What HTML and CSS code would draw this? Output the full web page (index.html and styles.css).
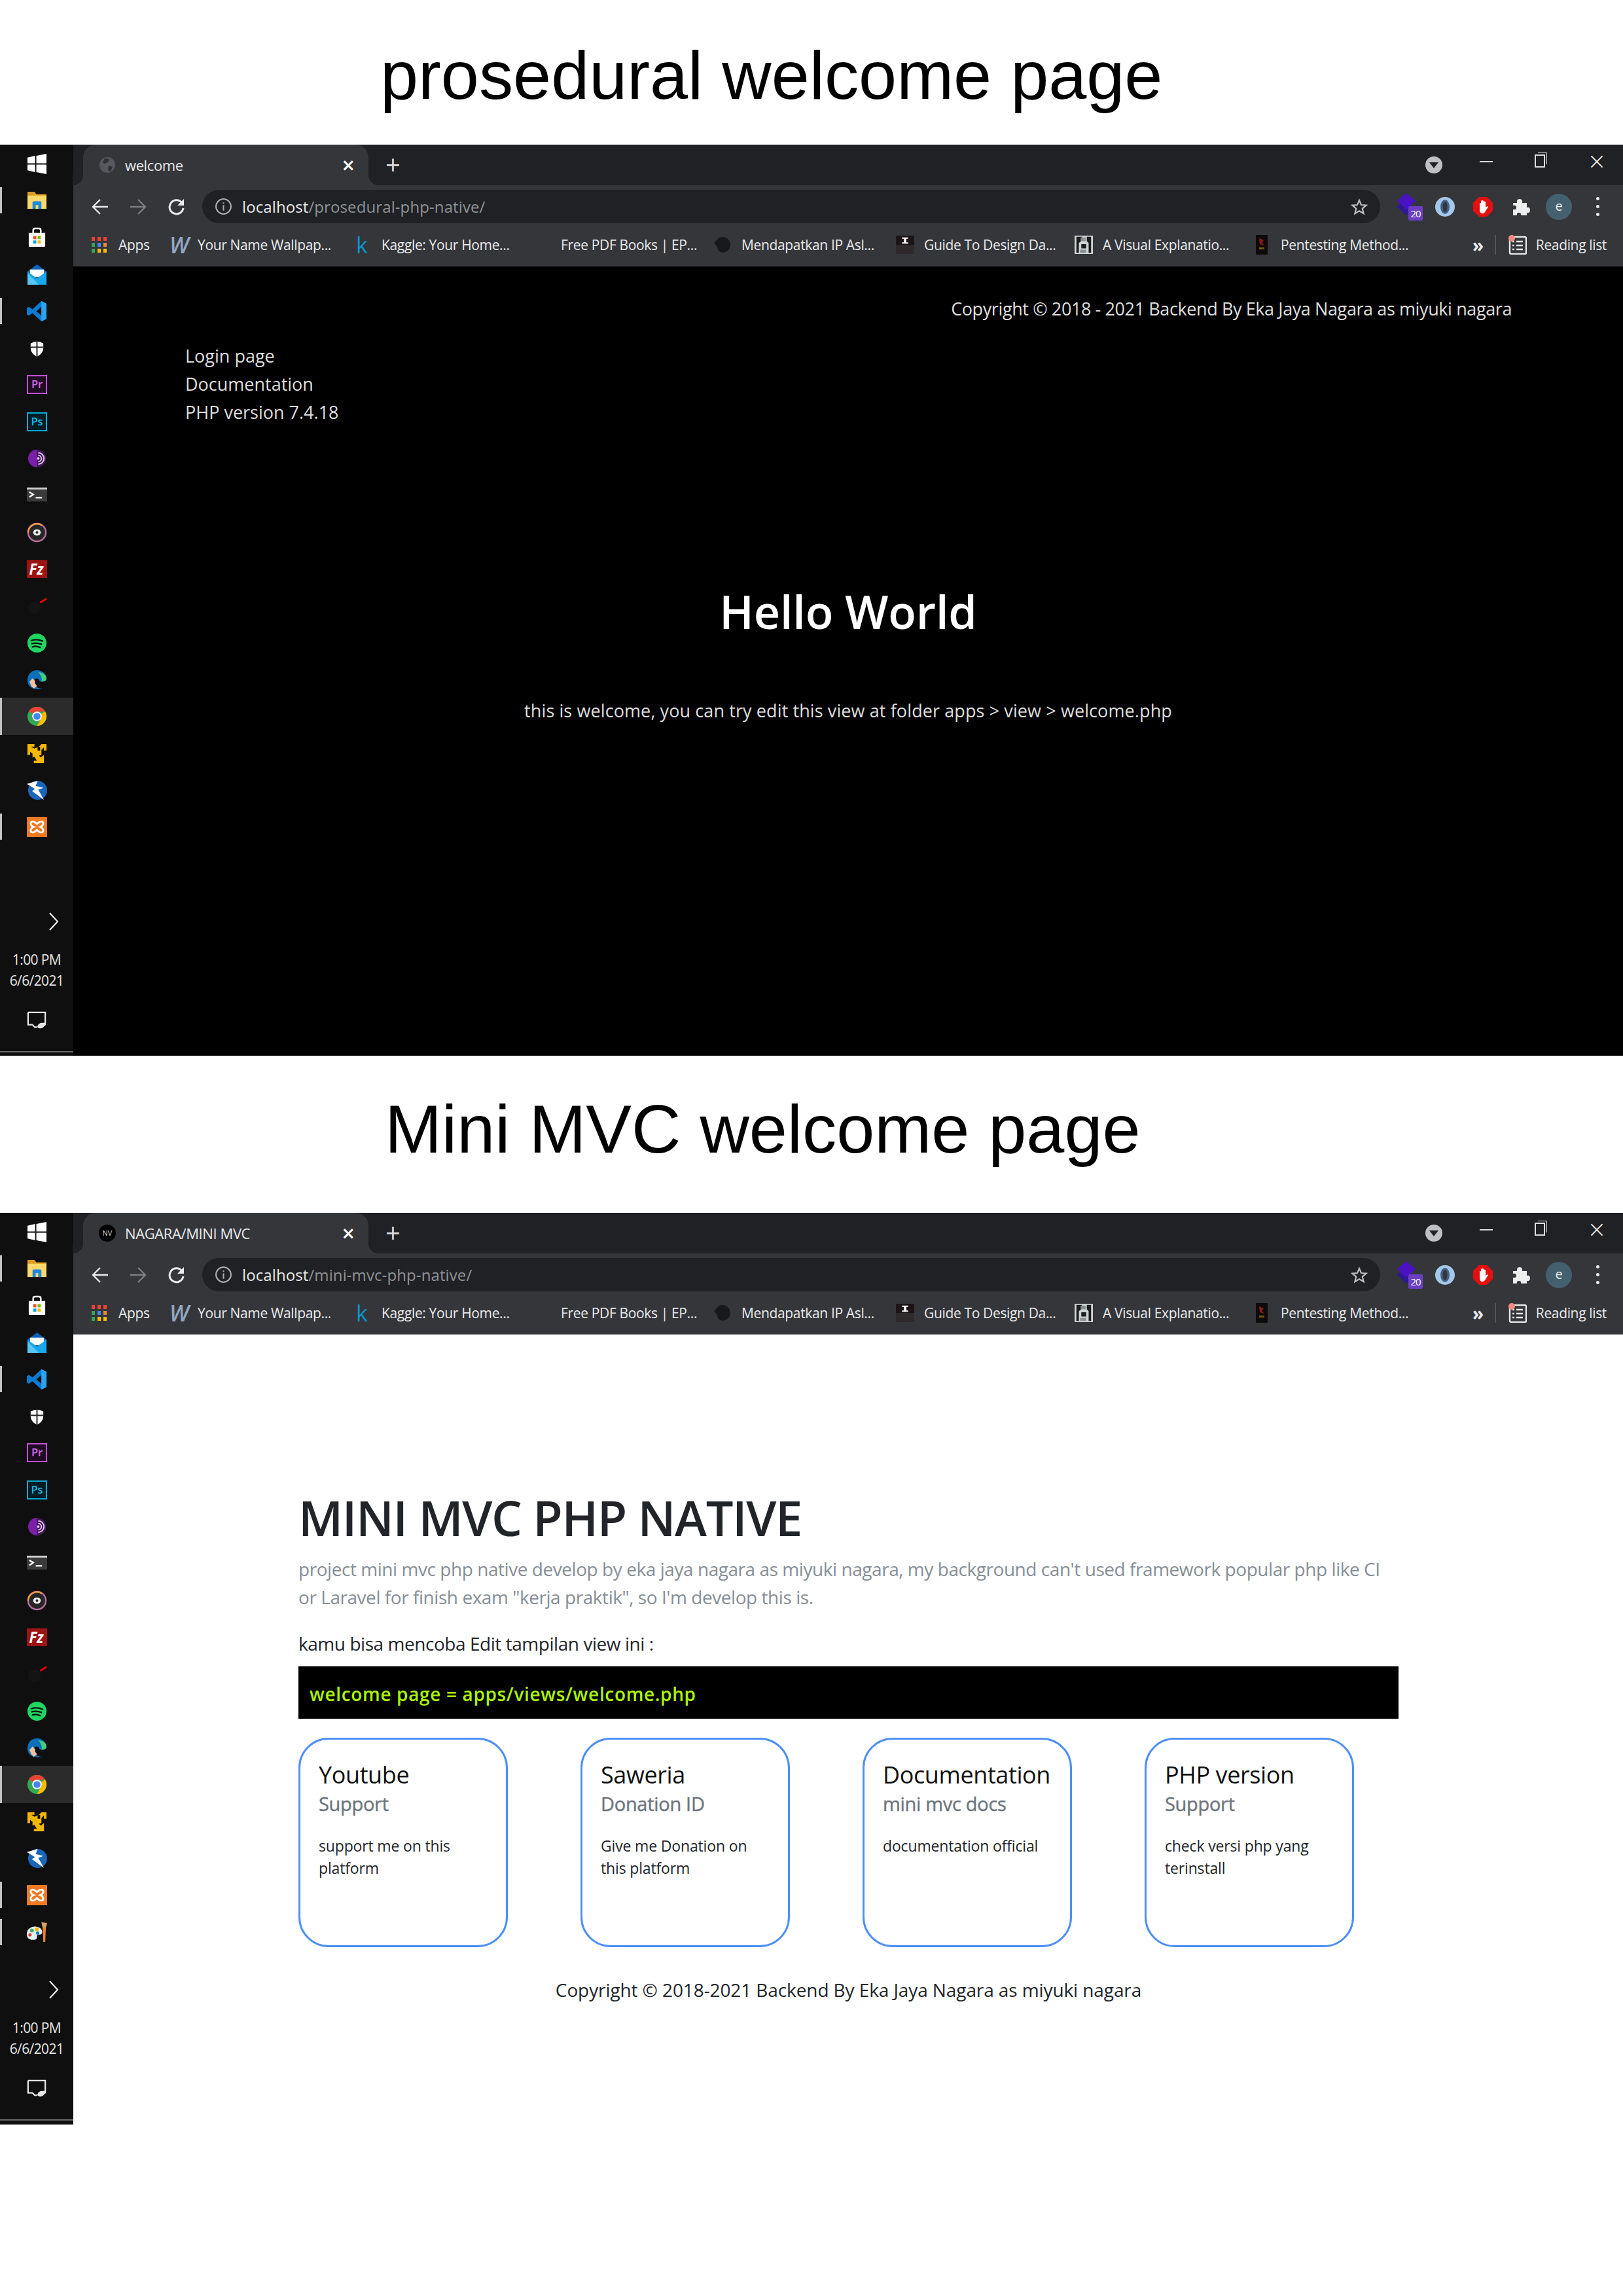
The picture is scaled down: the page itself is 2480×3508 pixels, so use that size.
FILE: index.html
```html
<!DOCTYPE html>
<html lang="en">
<head>
<meta charset="utf-8">
<title>welcome pages</title>
<link rel="stylesheet" href="styles.css">
</head>
<body>
<svg class="defs" aria-hidden="true">
  <symbol id="i-win" viewBox="0 0 32 32"><path fill="#fff" d="M1 6l12-3v12H1zM15 3l16-3v15H15zM1 17h12v12L1 26zM15 17h16v15l-16-3z"/></symbol>
  <symbol id="i-folder" viewBox="0 0 32 32"><path fill="#dc9c22" d="M1 2h11l3 4h16v6H1z"/><path fill="#fbd96b" d="M1 8h30v21H1z"/><path fill="#1c8ae0" d="M9 29V19q0-2 2-2h10q2 0 2 2v10h-5v-6h-4v6z"/></symbol>
  <symbol id="i-store" viewBox="0 0 32 32"><path fill="none" stroke="#fff" stroke-width="2.5" d="M10 10V5q0-3 3-3h6q3 0 3 3v5"/><path fill="#fff" d="M3 9h26v21q0 1-1 1H4q-1 0-1-1z"/><path fill="#f25022" d="M10 14h5v5h-5z"/><path fill="#7fba00" d="M17 14h5v5h-5z"/><path fill="#00a4ef" d="M10 21h5v5h-5z"/><path fill="#ffb900" d="M17 21h5v5h-5z"/></symbol>
  <symbol id="i-mail" viewBox="0 0 32 32"><path fill="#0a63b8" d="M1 11L16 0l15 11v4H1z"/><path fill="#fff" d="M5 8h22v12H5z"/><path fill="#1aa7ec" d="M1 11l15 11 15-11v21H1z"/><path fill="#56c6f5" d="M1 32V14l18 18z"/></symbol>
  <symbol id="i-code" viewBox="0 0 32 32"><path fill="#0b7ad1" d="M23 0l8 4v24l-8 4-14-13-6 4-3-2V11l3-2 6 4zm0 9l-8 7 8 7z"/><path fill="#2aa3ef" d="M23 0l8 4v24l-8 4z"/></symbol>
  <symbol id="i-shield" viewBox="0 0 32 32"><path fill="#fff" d="M6 9q10-6 20 0v7q0 9-10 14Q6 25 6 16z"/><path stroke="#222" stroke-width="2" d="M16 4v26M5 15h22"/></symbol>
  <symbol id="i-pr" viewBox="0 0 32 32"><rect x="1" y="2" width="30" height="28" fill="#1f0a24" stroke="#c453d8" stroke-width="2"/><text x="16" y="22" text-anchor="middle" class="ico-text" fill="#d26be6" font-size="17">Pr</text></symbol>
  <symbol id="i-ps" viewBox="0 0 32 32"><rect x="1" y="2" width="30" height="28" fill="#001d26" stroke="#00b4e0" stroke-width="2"/><text x="16" y="22" text-anchor="middle" class="ico-text" fill="#12bce6" font-size="17">Ps</text></symbol>
  <symbol id="i-tor" viewBox="0 0 32 32"><circle cx="16" cy="16" r="14" fill="#7c1fa8"/><path fill="#3d1a50" d="M16 2a14 14 0 010 28z"/><path fill="none" stroke="#e8c6f2" stroke-width="2" d="M18 7a9 9 0 010 18M18 11a5 5 0 010 10"/><circle cx="18" cy="16" r="2" fill="#e8c6f2"/></symbol>
  <symbol id="i-term" viewBox="0 0 32 32"><rect y="4" width="32" height="22" fill="#3a3a3a"/><rect y="4" width="32" height="3" fill="#ccc"/><path fill="none" stroke="#fff" stroke-width="2.5" d="M4 11l6 4-6 4M14 20h10"/></symbol>
  <symbol id="i-disc" viewBox="0 0 32 32"><circle cx="16" cy="16" r="14" fill="#262626" stroke="#b76fa0" stroke-width="2.5"/><path fill="none" stroke="#ef9a4a" stroke-width="2.5" d="M2 16A14 14 0 0124 5"/><ellipse cx="16" cy="16" rx="6" ry="5" fill="#eee"/><circle cx="16" cy="16" r="2" fill="#222"/></symbol>
  <symbol id="i-fz" viewBox="0 0 32 32"><rect y="2" width="32" height="28" fill="#9d1313"/><text x="15" y="25" text-anchor="middle" class="ico-text ico-bi" fill="#fff" font-size="23">Fz</text></symbol>
  <symbol id="i-tick" viewBox="0 0 32 32"><circle cx="12" cy="19" r="10" fill="#141414"/><path stroke="#e00" stroke-width="3" d="M21 11l10-6"/></symbol>
  <symbol id="i-spot" viewBox="0 0 32 32"><circle cx="16" cy="16" r="15" fill="#1ed760"/><path fill="none" stroke="#111" stroke-width="2.400" stroke-linecap="round" d="M7 12q9-3 18 1M8 17q8-2 15 1M9 22q6-2 12 1"/></symbol>
  <symbol id="i-edge" viewBox="0 0 32 32"><path fill="#0c6fb8" d="M1 17C1 7 8 1 16 1c8 0 15 6 15 13 0 4-4 5-8 5-5 0-2-4-7-5-6 0-6 8-1 13 2 2 6 3 10 3-3 1-5 1-8 1C7 31 1 25 1 17z"/><path fill="#3fd07a" d="M18 4c6 0 13 4 13 10 0 4-4 5-8 5 2-5-1-11-5-15z"/><path fill="#f0c3a0" d="M4 19l5-5 4 4v4l3 4-5 4-4-4z"/></symbol>
  <symbol id="i-chrome" viewBox="0 0 32 32"><circle cx="16" cy="16" r="15" fill="#34a853"/><path fill="#ea4335" d="M16 1a15 15 0 0113 7.500H16a7.500 7.500 0 00-6.500 3.700L3 8a15 15 0 0113-7z"/><path fill="#fbbc05" d="M29 8.500a15 15 0 01-13 22.500l6.500-11.300A7.500 7.500 0 0023 16a7.500 7.500 0 00-1-3.700z"/><circle cx="16" cy="16" r="7.500" fill="#fff"/><circle cx="16" cy="16" r="5.500" fill="#4285f4"/></symbol>
  <symbol id="i-yellow" viewBox="0 0 32 32"><path fill="#f5b800" d="M1 2h11v4H7l5 3 5-2v5h4V6l-3 1 5-5h8v10h-4V7l-4 4v8l-4 1 3 3 5-4v13H11v-4h5l-4-6-3 1v-6l-4-3v5H1z"/></symbol>
  <symbol id="i-bolt" viewBox="0 0 32 32"><circle cx="17" cy="16" r="15" fill="#1a66b8"/><path fill="#fff" d="M0 6l17-5-3 8 12 3-8 3 9 16L8 17l5-3z"/></symbol>
  <symbol id="i-xampp" viewBox="0 0 32 32"><rect width="32" height="32" rx="1" fill="#ee7a24"/><path fill="none" stroke="#fff" stroke-width="3" d="M12 8q-5-2-6 2 0 4 5 6-5 2-5 6 1 4 6 2l4-3 4 3q5 2 6-2 0-4-5-6 5-2 5-6-1-4-6-2l-4 3z"/></symbol>
  <symbol id="i-paint" viewBox="0 0 32 32"><path fill="#e2f2fa" d="M0 20C0 11 8 7 15 8c7 1 10 5 9 10-1 3-5 2-7 3-2 2 0 6-3 7C6 30 0 27 0 20z"/><circle cx="8" cy="14" r="3" fill="#3bb54a"/><circle cx="16" cy="12" r="3" fill="#f5b800"/><circle cx="5" cy="21" r="2.600" fill="#e8392c"/><circle cx="17" cy="18" r="2.600" fill="#1c6fc4"/><path fill="#f0861e" d="M25 10h5l-1 22h-3z"/><path fill="#d9a066" d="M23 1l9 1-2 8h-5z"/></symbol>

  <symbol id="i-chev" viewBox="0 0 16 28"><path fill="none" stroke="#eee" stroke-width="2.200" d="M2 1l12 13L2 27"/></symbol>
  <symbol id="i-back" viewBox="0 0 26 26"><path fill="none" stroke="currentColor" stroke-width="2.400" d="M25 13H3M13 2L2 13l11 11"/></symbol>
  <symbol id="i-fwd" viewBox="0 0 26 26"><path fill="none" stroke="currentColor" stroke-width="2.400" d="M1 13h22M13 2l11 11-11 11"/></symbol>
  <symbol id="i-reload" viewBox="0 0 26 26"><path fill="none" stroke="currentColor" stroke-width="3" d="M22 7a10.500 10.500 0 10 2 8"/><path fill="currentColor" d="M25 1v10H15z"/></symbol>
  <symbol id="i-info" viewBox="0 0 26 26"><circle cx="13" cy="13" r="11" fill="none" stroke="currentColor" stroke-width="2"/><path fill="currentColor" d="M12 11h2v8h-2zM12 7h2v2h-2z"/></symbol>
  <symbol id="i-star" viewBox="0 0 26 26"><path fill="none" stroke="currentColor" stroke-width="2.200" d="M13 3l3 7 7.500.700-5.700 5 1.800 7.500L13 19.300 6.400 23.200 8.200 15.700 2.500 10.700 10 10z"/></symbol>
  <symbol id="i-globe" viewBox="0 0 26 26"><circle cx="13" cy="13" r="12" fill="#55585e"/><path fill="#2f3135" d="M9 3l7 1-2 5-5 2-3-2zM15 14l6 2-3 7-4-2z"/></symbol>
  <symbol id="i-apps" viewBox="0 0 24 26"><path fill="#ea4335" d="M0 1h5v6H0zM9 1h5v6H9zM18 1h5v6h-5z"/><path fill="#34a853" d="M0 10h5v6H0z"/><path fill="#4285f4" d="M9 10h5v6H9z"/><path fill="#ea8a35" d="M18 10h5v6h-5z"/><path fill="#34a853" d="M0 19h5v6H0z"/><path fill="#fbbc05" d="M9 19h5v6H9zM18 19h5v6h-5z"/></symbol>
  <symbol id="i-ghost" viewBox="0 0 28 28"><path fill="#17181a" d="M1 11L9 3q5-2 10 0 7 4 7 11t-7 11q-6 2-10-1-3-3-3-7z"/></symbol>
  <symbol id="i-24" viewBox="0 0 30 30"><rect width="30" height="15" fill="#1c1416"/><rect y="15" width="30" height="15" fill="#2e2a2c"/><path fill="#fff" d="M10 3h10v2h-3v6h3v2H10v-2h3V5h-3z"/></symbol>
  <symbol id="i-pic" viewBox="0 0 30 30"><rect width="30" height="30" fill="#cfd4d4"/><path fill="#1c1c1c" d="M3 2h9v6l-5 4v16H3zM27 2h-7v7l3 3v16h4zM11 14h8v7h-8z"/><path fill="#8a9090" d="M10 3h8v6h-8zM9 23h10v5H9z"/></symbol>
  <symbol id="i-book" viewBox="0 0 18 30"><rect width="18" height="30" rx="1" fill="#0e0a0a"/><path fill="#8e1c16" d="M5 5l7 3-3 4 4 4-7-2z"/><path fill="#6b5a10" d="M5 19h8v3H5z"/></symbol>
  <symbol id="i-stack" viewBox="0 0 40 42"><path fill="#2e1a8c" d="M0 20L14 34l14-10L14 12z"/><path fill="#4a12c4" d="M1 12L15 0l14 12-14 13z"/><rect x="18" y="20" width="22" height="22" rx="2" fill="#6a3fc4"/></symbol>
  <symbol id="i-ring" viewBox="0 0 30 30"><ellipse cx="15" cy="15" rx="15" ry="15" fill="#a4c8ea"/><ellipse cx="15" cy="15" rx="7" ry="11" fill="#44628a"/><ellipse cx="15" cy="15" rx="3.500" ry="8" fill="#35363a"/></symbol>
  <symbol id="i-stop" viewBox="0 0 30 30"><path fill="#e60f0f" d="M9 0h12l9 9v12l-9 9H9l-9-9V9z"/><path fill="#fff" d="M10 9q2-1 2 2V6q2-2 4 0v1q3-1 3 1v8q3-3 4-1l-5 8q-2 3-5 2-3-1-3-5z"/></symbol>
  <symbol id="i-puzzle" viewBox="0 0 28 28"><path fill="#eee" d="M2 8h6q-1-6 4-6t4 6h7v7q5-1 5 4t-5 4v4H14q1-4-3-4t-3 4H2v-9q5 1 5-3T2 12z"/></symbol>
  <symbol id="i-reading" viewBox="0 0 28 30"><rect x="2" y="3" width="25" height="26" rx="2" fill="none" stroke="#e8e8e8" stroke-width="2.400"/><path stroke="#e8e8e8" stroke-width="2.400" d="M6 10h3M12 10h10M6 16h3M12 16h10M6 22h3M12 22h10"/><circle cx="5" cy="5" r="5" fill="#f28b82"/></symbol>
  <symbol id="i-note" viewBox="0 0 32 32"><path fill="none" stroke="#e6e6e6" stroke-width="2.400" d="M2 3h28v18q0 3-3 3h-1M17 27l-4 0-4-4H2V3"/><path fill="#e6e6e6" d="M17 26q2-6 8-6 5 0 5 0-1 8-7 9-5 0-6-3z"/></symbol>
</svg>

<main class="page">
  <header class="caption caption-first"><h2 class="caption-text">prosedural welcome page</h2></header>

  <section class="window window-dark">
    <aside class="taskbar">
      <div class="slots">
        <div class="slot"><svg class="ti"><use href="#i-win"/></svg></div>
        <div class="slot on"><svg class="ti"><use href="#i-folder"/></svg></div>
        <div class="slot"><svg class="ti"><use href="#i-store"/></svg></div>
        <div class="slot"><svg class="ti"><use href="#i-mail"/></svg></div>
        <div class="slot on"><svg class="ti"><use href="#i-code"/></svg></div>
        <div class="slot"><svg class="ti"><use href="#i-shield"/></svg></div>
        <div class="slot"><svg class="ti"><use href="#i-pr"/></svg></div>
        <div class="slot"><svg class="ti"><use href="#i-ps"/></svg></div>
        <div class="slot"><svg class="ti"><use href="#i-tor"/></svg></div>
        <div class="slot"><svg class="ti"><use href="#i-term"/></svg></div>
        <div class="slot"><svg class="ti"><use href="#i-disc"/></svg></div>
        <div class="slot"><svg class="ti"><use href="#i-fz"/></svg></div>
        <div class="slot"><svg class="ti"><use href="#i-tick"/></svg></div>
        <div class="slot"><svg class="ti"><use href="#i-spot"/></svg></div>
        <div class="slot"><svg class="ti"><use href="#i-edge"/></svg></div>
        <div class="slot current"><svg class="ti"><use href="#i-chrome"/></svg></div>
        <div class="slot"><svg class="ti"><use href="#i-yellow"/></svg></div>
        <div class="slot"><svg class="ti"><use href="#i-bolt"/></svg></div>
        <div class="slot on"><svg class="ti"><use href="#i-xampp"/></svg></div>
      </div>
      <div class="tray">
        <svg class="tray-chevron"><use href="#i-chev"/></svg>
        <div class="clock"><span>1:00 PM</span><span>6/6/2021</span></div>
        <svg class="tray-note"><use href="#i-note"/></svg>
        <div class="tray-line"></div>
      </div>
    </aside>
    <div class="browser">
      <div class="tabstrip">
        <div class="tab">
          <svg class="favicon"><use href="#i-globe"/></svg>
          <span class="tab-title">welcome</span>
          <span class="tab-close">×</span>
        </div>
        <span class="tab-new">+</span>
        <span class="tab-search"><span class="tab-search-tri"></span></span>
        <span class="win-min"></span>
        <span class="win-restore"></span>
        <span class="win-close">×</span>
      </div>
      <div class="toolbar">
        <svg class="nav nav-on"><use href="#i-back"/></svg>
        <svg class="nav nav-off"><use href="#i-fwd"/></svg>
        <svg class="nav nav-on"><use href="#i-reload"/></svg>
        <div class="omnibox">
          <svg class="omni-info"><use href="#i-info"/></svg>
          <span class="url"><span class="url-host">localhost</span>/prosedural-php-native/</span>
          <svg class="omni-star"><use href="#i-star"/></svg>
        </div>
        <div class="exts">
          <span class="ext-stack"><svg class="ext-stack-ico"><use href="#i-stack"/></svg><span class="ext-count">20</span></span>
          <svg class="ext-ring"><use href="#i-ring"/></svg>
          <svg class="ext-stop"><use href="#i-stop"/></svg>
          <svg class="ext-puzzle"><use href="#i-puzzle"/></svg>
          <span class="avatar">e</span>
          <span class="dots"><i></i><i></i><i></i></span>
        </div>
      </div>
      <div class="bookmarks">
        <div class="bm"><svg class="bm-apps"><use href="#i-apps"/></svg>Apps</div>
        <div class="bm"><span class="bm-w">W</span>Your Name Wallpap...</div>
        <div class="bm"><span class="bm-k">k</span>Kaggle: Your Home...</div>
        <div class="bm"><span class="bm-blank"></span>Free PDF Books | EP...</div>
        <div class="bm"><svg class="bm-ico"><use href="#i-ghost"/></svg>Mendapatkan IP Asl...</div>
        <div class="bm"><svg class="bm-ico"><use href="#i-24"/></svg>Guide To Design Da...</div>
        <div class="bm"><svg class="bm-ico"><use href="#i-pic"/></svg>A Visual Explanatio...</div>
        <div class="bm"><svg class="bm-book"><use href="#i-book"/></svg>Pentesting Method...</div>
        <div class="bm-end"><span class="bm-more">»</span><span class="bm-sep"></span><svg class="bm-reading"><use href="#i-reading"/></svg>Reading list</div>
      </div>
      <div class="dark-page">
        <p class="dark-copy">Copyright © 2018 - 2021 Backend By Eka Jaya Nagara as miyuki nagara</p>
        <ul class="dark-nav">
          <li>Login page</li>
          <li>Documentation</li>
          <li>PHP version 7.4.18</li>
        </ul>
        <h1 class="dark-title">Hello World</h1>
        <p class="dark-text">this is welcome, you can try edit this view at folder apps &gt; view &gt; welcome.php</p>
      </div>
    </div>
  </section>

  <header class="caption caption-second"><h2 class="caption-text caption-text-b">Mini MVC welcome page</h2></header>

  <section class="window window-light">
    <aside class="taskbar">
      <div class="slots">
        <div class="slot"><svg class="ti"><use href="#i-win"/></svg></div>
        <div class="slot on"><svg class="ti"><use href="#i-folder"/></svg></div>
        <div class="slot"><svg class="ti"><use href="#i-store"/></svg></div>
        <div class="slot"><svg class="ti"><use href="#i-mail"/></svg></div>
        <div class="slot on"><svg class="ti"><use href="#i-code"/></svg></div>
        <div class="slot"><svg class="ti"><use href="#i-shield"/></svg></div>
        <div class="slot"><svg class="ti"><use href="#i-pr"/></svg></div>
        <div class="slot"><svg class="ti"><use href="#i-ps"/></svg></div>
        <div class="slot"><svg class="ti"><use href="#i-tor"/></svg></div>
        <div class="slot"><svg class="ti"><use href="#i-term"/></svg></div>
        <div class="slot"><svg class="ti"><use href="#i-disc"/></svg></div>
        <div class="slot"><svg class="ti"><use href="#i-fz"/></svg></div>
        <div class="slot"><svg class="ti"><use href="#i-tick"/></svg></div>
        <div class="slot"><svg class="ti"><use href="#i-spot"/></svg></div>
        <div class="slot"><svg class="ti"><use href="#i-edge"/></svg></div>
        <div class="slot current"><svg class="ti"><use href="#i-chrome"/></svg></div>
        <div class="slot"><svg class="ti"><use href="#i-yellow"/></svg></div>
        <div class="slot"><svg class="ti"><use href="#i-bolt"/></svg></div>
        <div class="slot on"><svg class="ti"><use href="#i-xampp"/></svg></div>
        <div class="slot on"><svg class="ti"><use href="#i-paint"/></svg></div>
      </div>
      <div class="tray">
        <svg class="tray-chevron"><use href="#i-chev"/></svg>
        <div class="clock"><span>1:00 PM</span><span>6/6/2021</span></div>
        <svg class="tray-note"><use href="#i-note"/></svg>
        <div class="tray-line"></div>
      </div>
    </aside>
    <div class="browser">
      <div class="tabstrip">
        <div class="tab">
          <span class="favicon favicon-nv">NV</span>
          <span class="tab-title">NAGARA/MINI MVC</span>
          <span class="tab-close">×</span>
        </div>
        <span class="tab-new">+</span>
        <span class="tab-search"><span class="tab-search-tri"></span></span>
        <span class="win-min"></span>
        <span class="win-restore"></span>
        <span class="win-close">×</span>
      </div>
      <div class="toolbar">
        <svg class="nav nav-on"><use href="#i-back"/></svg>
        <svg class="nav nav-off"><use href="#i-fwd"/></svg>
        <svg class="nav nav-on"><use href="#i-reload"/></svg>
        <div class="omnibox">
          <svg class="omni-info"><use href="#i-info"/></svg>
          <span class="url"><span class="url-host">localhost</span>/mini-mvc-php-native/</span>
          <svg class="omni-star"><use href="#i-star"/></svg>
        </div>
        <div class="exts">
          <span class="ext-stack"><svg class="ext-stack-ico"><use href="#i-stack"/></svg><span class="ext-count">20</span></span>
          <svg class="ext-ring"><use href="#i-ring"/></svg>
          <svg class="ext-stop"><use href="#i-stop"/></svg>
          <svg class="ext-puzzle"><use href="#i-puzzle"/></svg>
          <span class="avatar">e</span>
          <span class="dots"><i></i><i></i><i></i></span>
        </div>
      </div>
      <div class="bookmarks">
        <div class="bm"><svg class="bm-apps"><use href="#i-apps"/></svg>Apps</div>
        <div class="bm"><span class="bm-w">W</span>Your Name Wallpap...</div>
        <div class="bm"><span class="bm-k">k</span>Kaggle: Your Home...</div>
        <div class="bm"><span class="bm-blank"></span>Free PDF Books | EP...</div>
        <div class="bm"><svg class="bm-ico"><use href="#i-ghost"/></svg>Mendapatkan IP Asl...</div>
        <div class="bm"><svg class="bm-ico"><use href="#i-24"/></svg>Guide To Design Da...</div>
        <div class="bm"><svg class="bm-ico"><use href="#i-pic"/></svg>A Visual Explanatio...</div>
        <div class="bm"><svg class="bm-book"><use href="#i-book"/></svg>Pentesting Method...</div>
        <div class="bm-end"><span class="bm-more">»</span><span class="bm-sep"></span><svg class="bm-reading"><use href="#i-reading"/></svg>Reading list</div>
      </div>
      <div class="light-page">
        <div class="container">
          <h1 class="jumbo-title">MINI MVC PHP NATIVE</h1>
          <p class="lead">project mini mvc php native develop by eka jaya nagara as miyuki nagara, my background can't used framework popular php like CI<br>or Laravel for finish exam "kerja praktik", so I'm develop this is.</p>
          <p class="hint">kamu bisa mencoba Edit tampilan view ini :</p>
          <pre class="code-bar">welcome page = apps/views/welcome.php</pre>
          <div class="cards">
            <article class="card">
              <h3 class="card-title">Youtube</h3>
              <h4 class="card-sub">Support</h4>
              <p class="card-text">support me on this platform</p>
            </article>
            <article class="card">
              <h3 class="card-title">Saweria</h3>
              <h4 class="card-sub">Donation ID</h4>
              <p class="card-text">Give me Donation on this platform</p>
            </article>
            <article class="card">
              <h3 class="card-title">Documentation</h3>
              <h4 class="card-sub">mini mvc docs</h4>
              <p class="card-text">documentation official</p>
            </article>
            <article class="card">
              <h3 class="card-title">PHP version</h3>
              <h4 class="card-sub">Support</h4>
              <p class="card-text">check versi php yang terinstall</p>
            </article>
          </div>
          <p class="light-copy">Copyright © 2018-2021 Backend By Eka Jaya Nagara as miyuki nagara</p>
        </div>
      </div>
    </div>
  </section>
</main>
</body>
</html>
```
FILE: styles.css
```css
* { box-sizing: border-box; }
html, body { margin: 0; padding: 0; background: #fff; }
body { width: 2480px; height: 3508px; overflow: hidden; font-family: "Open Sans", "Noto Sans", sans-serif; }
h1, h2, h3, h4, p, ul, pre { margin: 0; padding: 0; }
ul { list-style: none; }
.defs { display: none; }
.ico-text { font-family: "Open Sans", sans-serif; font-weight: 600; }
.ico-bi { font-style: italic; font-weight: 700; }

.page { display: flex; flex-direction: column; }
.caption { display: flex; align-items: center; background: #fff; }
.caption-first { height: 221px; padding: 8px 0 0 581px; }
.caption-second { height: 240px; padding: 0 0 16px 588px; }
.caption-text { font-family: "Liberation Sans", Arial, sans-serif; font-weight: 400; font-size: 104.4px; line-height: 120px; color: #000; }

.window { display: flex; width: 2480px; align-items: flex-start; }
.window-dark { height: 1392px; background: #000; }
.window-light { height: 1655px; background: #fff; }

.taskbar { flex: 0 0 112px; width: 112px; height: 1393px; background: #0f0f0f; display: flex; flex-direction: column; }
.slots { display: grid; grid-auto-rows: 56.3px; padding-top: 1px; }
.slot { position: relative; display: flex; align-items: center; justify-content: center; }
.slot.on::before, .slot.current::before { content: ""; position: absolute; left: 0; top: 8px; width: 3px; height: 40px; background: #c4c4c4; }
.slot.current { background: #2b2b2b; }
.slot.current::before { top: 0; height: 100%; }
.ti { width: 31px; height: 31px; display: block; }

.tray { margin-top: auto; display: flex; flex-direction: column; align-items: center; color: #e4e4e4; }
.tray-chevron { align-self: flex-end; width: 16px; height: 28px; margin-right: 22px; }
.clock { margin-top: 28px; display: flex; flex-direction: column; align-items: center; font-size: 21px; line-height: 32px; letter-spacing: -0.6px; }
.tray-note { width: 32px; height: 30px; margin-top: 30px; }
.tray-line { width: 112px; height: 2px; margin-top: 32px; margin-bottom: 6px; background: #6a6a6a; }

.browser { flex: 1 1 0; min-width: 0; display: flex; flex-direction: column; }

.tabstrip { height: 62px; background: #202124; display: flex; align-items: center; padding-left: 15px; padding-right: 32px; color: #e8eaed; }
.tab { position: relative; align-self: stretch; width: 436px; background: #35363a; border-radius: 20px 20px 0 0; display: flex; align-items: center; padding: 0 21px 0 24px; }
.tab::before, .tab::after { content: ""; position: absolute; bottom: 0; width: 16px; height: 16px; }
.tab::before { left: -16px; background: radial-gradient(circle at 0 0, #202124 16px, #35363a 16.5px); }
.tab::after { right: -16px; background: radial-gradient(circle at 100% 0, #202124 16px, #35363a 16.5px); }
.favicon { width: 26px; height: 26px; flex: 0 0 26px; display: block; }
.favicon-nv { border-radius: 50%; background: #000; color: #ddd; font-size: 11px; line-height: 26px; text-align: center; }
.tab-title { margin-left: 14px; font-size: 22px; letter-spacing: -0.4px; color: #e8eaed; }
.tab-close { margin-left: auto; font-size: 34px; line-height: 30px; font-weight: 600; color: #fff; }
.tab-new { margin-left: 26px; font-size: 40px; line-height: 40px; color: #ddd; font-weight: 400; }
.tab-search { margin-left: auto; width: 26px; height: 26px; border-radius: 50%; background: #bdc1c6; display: flex; align-items: center; justify-content: center; }
.tab-search-tri { width: 0; height: 0; border-left: 7px solid transparent; border-right: 7px solid transparent; border-top: 9px solid #202124; }
.win-min { margin-left: 57px; width: 20px; height: 2px; margin-top: -10px; background: #ddd; }
.win-restore { margin-left: 64px; margin-top: -12px; width: 16px; height: 20px; border: 2px solid #ddd; box-shadow: 3px -3px 0 -1px #202124, 4px -4px 0 -1px #ddd; }
.win-close { margin-left: 67px; width: 20px; margin-top: -12px; font-size: 42px; line-height: 28px; font-weight: 300; color: #eee; text-align: center; }

.toolbar { height: 58px; padding: 7px 0 0 28px; background: #35363a; display: flex; align-items: center; }
.nav { width: 26px; height: 26px; flex: 0 0 26px; margin-right: 32px; }
.nav-on { color: #e8eaed; }
.nav-off { color: #7c7e82; }
.nav:nth-of-type(3) { margin-right: 27px; }
.omnibox { width: 1800px; height: 51px; border-radius: 26px; background: #202124; display: flex; align-items: center; padding: 0 19px; }
.omni-info { width: 27px; height: 27px; color: #aaadb1; }
.url { margin-left: 15px; font-size: 24px; letter-spacing: 0.1px; color: #8f9296; }
.url-host { color: #e8eaed; }
.omni-star { margin-left: auto; width: 26px; height: 26px; color: #bdbfc3; }
.exts { display: flex; align-items: center; margin-left: 25px; }
.ext-stack { position: relative; display: block; width: 40px; height: 42px; }
.ext-stack-ico { width: 40px; height: 42px; display: block; }
.ext-count { position: absolute; right: 0; bottom: 0; width: 22px; height: 22px; font-size: 15px; line-height: 22px; letter-spacing: -1px; text-align: center; color: #fff; }
.ext-ring { width: 30px; height: 30px; margin-left: 19px; }
.ext-stop { width: 30px; height: 30px; margin-left: 28px; }
.ext-puzzle { width: 28px; height: 28px; margin-left: 29px; }
.avatar { width: 40px; height: 40px; margin-left: 24px; border-radius: 50%; background: #44606e; color: #e8eaed; font-size: 20px; line-height: 38px; text-align: center; }
.dots { display: flex; flex-direction: column; gap: 7px; margin-left: 37px; }
.dots i { width: 5px; height: 5px; border-radius: 50%; background: #e8eaed; display: block; }

.bookmarks { height: 66px; background: #35363a; border-bottom: 1px solid #4a4b4f; display: grid; grid-template-columns: 119px 285px 276px 270px 279px 273px 277px 1fr auto; align-items: center; padding: 0 25px 0 28px; font-size: 21px; letter-spacing: -0.35px; color: #e8eaed; white-space: nowrap; }
.bm, .bm-end { display: flex; align-items: center; }
.bm-apps { width: 24px; height: 26px; margin-right: 17px; }
.bm-w { width: 28px; margin-right: 15px; font-size: 34px; line-height: 30px; font-style: italic; font-weight: 600; letter-spacing: -3px; color: #92a6c0; }
.bm-k { width: 18px; margin-right: 21px; font-size: 34px; line-height: 30px; color: #0c93c9; letter-spacing: 0; }
.bm-blank { width: 18px; height: 28px; margin-right: 19px; }
.bm-ico { width: 28px; height: 28px; margin-right: 15px; }
.bm-book { width: 18px; height: 30px; margin-right: 20px; }
.bm-more { font-size: 28px; line-height: 28px; font-weight: 700; }
.bm-sep { width: 1px; height: 30px; margin-left: 18px; background: #5f6368; }
.bm-reading { width: 28px; height: 30px; margin: 0 14px 0 19px; }

.dark-page { height: 985px; background: #000; color: #dedede; font-size: 27px; line-height: 43px; padding-top: 43px; }
.dark-copy { text-align: right; padding-right: 170px; letter-spacing: -0.4px; }
.dark-nav { margin-top: 29px; padding-left: 171px; letter-spacing: 0; }
.dark-title { margin-top: 243px; text-align: center; font-size: 70px; line-height: 80px; font-weight: 600; color: #fff; letter-spacing: -0.15px; }
.dark-text { margin-top: 90px; text-align: center; letter-spacing: 0.1px; }

.light-page { background: #fff; padding: 235px 0 0 344px; }
.container { width: 1681px; }
.jumbo-title { font-size: 74px; line-height: 90px; font-weight: 600; color: #212529; letter-spacing: -1.4px; }
.lead { margin-top: 12px; font-size: 28px; line-height: 43px; color: #868e96; letter-spacing: -0.45px; white-space: nowrap; }
.hint { margin-top: 28px; font-size: 28px; line-height: 43px; color: #212529; letter-spacing: -0.45px; }
.code-bar { margin-top: 13px; height: 80px; padding: 0 17px; background: #000; color: #aaf500; font-family: "Open Sans", sans-serif; font-size: 28px; font-weight: 600; line-height: 84px; letter-spacing: 0.65px; }
.cards { margin-top: 29px; display: grid; grid-template-columns: repeat(4, 320px); column-gap: 111px; }
.card { height: 320px; border: 3px solid #4d8ff5; border-radius: 46px; padding: 29px 26px 0 28px; }
.card-title { font-size: 36px; line-height: 50px; font-weight: 400; color: #111; letter-spacing: -0.4px; }
.card-sub { margin-top: 0; font-size: 29px; line-height: 38px; font-weight: 400; color: #6c757d; letter-spacing: -0.3px; -webkit-text-stroke: 0.4px #6c757d; }
.card-text { margin-top: 28px; font-size: 23px; line-height: 34px; color: #212529; letter-spacing: -0.16px; }
.light-copy { margin-top: 44px; text-align: center; font-size: 28px; line-height: 43px; color: #212529; letter-spacing: -0.1px; }
```
